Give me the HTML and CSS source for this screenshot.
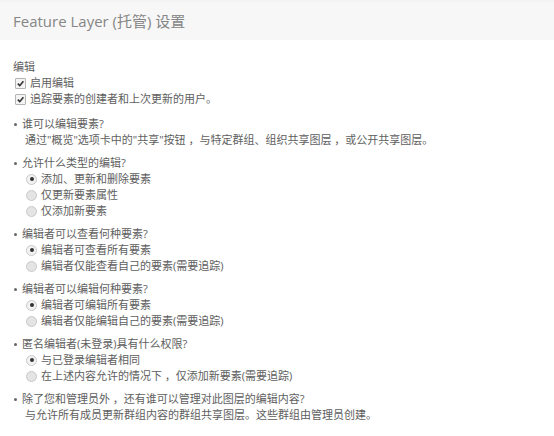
FILE: index.html
```html
<!DOCTYPE html>
<html lang="zh-CN">
<head>
    <meta charset="UTF-8">
    <title>Feature Layer (托管) 设置</title>
    <link rel="stylesheet" href="styles.css">
</head>
<body>
    <div class="panel-header">
        <h2>Feature Layer (托管) 设置</h2>
    </div>
    <div class="panel-body">
        <div class="group">
            <div class="group-title">编辑</div>
            <label class="option check"><span class="box checked"><svg viewBox="0 0 10 10"><path d="M2 5.2 L4.2 7.4 L8.2 2.4" /></svg></span>启用编辑</label>
            <label class="option check"><span class="box checked"><svg viewBox="0 0 10 10"><path d="M2 5.2 L4.2 7.4 L8.2 2.4" /></svg></span>追踪要素的创建者和上次更新的用户。</label>
        </div>

        <ul class="questions">
            <li>
                <div class="question">谁可以编辑要素?</div>
                <div class="note">通过"概览"选项卡中的"共享"按钮 ，与特定群组、组织共享图层 ，或公开共享图层。</div>
            </li>
            <li>
                <div class="question">允许什么类型的编辑?</div>
                <label class="option radio"><span class="dot selected"></span>添加、更新和删除要素</label>
                <label class="option radio"><span class="dot"></span>仅更新要素属性</label>
                <label class="option radio"><span class="dot"></span>仅添加新要素</label>
            </li>
            <li>
                <div class="question">编辑者可以查看何种要素?</div>
                <label class="option radio"><span class="dot selected"></span>编辑者可查看所有要素</label>
                <label class="option radio"><span class="dot"></span>编辑者仅能查看自己的要素(需要追踪)</label>
            </li>
            <li>
                <div class="question">编辑者可以编辑何种要素?</div>
                <label class="option radio"><span class="dot selected"></span>编辑者可编辑所有要素</label>
                <label class="option radio"><span class="dot"></span>编辑者仅能编辑自己的要素(需要追踪)</label>
            </li>
            <li>
                <div class="question">匿名编辑者(未登录)具有什么权限?</div>
                <label class="option radio"><span class="dot selected"></span>与已登录编辑者相同</label>
                <label class="option radio"><span class="dot"></span>在上述内容允许的情况下 ，仅添加新要素(需要追踪)</label>
            </li>
            <li>
                <div class="question">除了您和管理员外 ，还有谁可以管理对此图层的编辑内容?</div>
                <div class="note">与允许所有成员更新群组内容的群组共享图层。这些群组由管理员创建。</div>
            </li>
        </ul>
    </div>
</body>
</html>
```

FILE: styles.css
```css
body {
    margin: 0;
    padding: 0;
    background-color: #fff;
    font-family: 'Open Sans', 'Noto Sans CJK SC', sans-serif;
    font-size: 11px;
    line-height: 16px;
    color: #5e5e5e;
}
.panel-header {
    height: 40px;
    display: flex;
    align-items: center;
    padding: 0 13px;
    background-color: #f7f7f7;
    border-top: 2px solid #f3f3f3;
    box-sizing: border-box;
}
.panel-header h2 {
    margin: 0;
    font-size: 15px;
    font-weight: normal;
    color: #868686;
}
.panel-body {
    padding: 19px 13px 0;
}
.group-title {
    color: #5e5e5e;
}
.option {
    display: flex;
    align-items: center;
}
.check {
    padding-left: 2px;
}
.box {
    width: 9px;
    height: 9px;
    margin-right: 4px;
    border: 1px solid #b5b5b5;
    border-radius: 1px;
    background-color: #f4f4f4;
    display: inline-flex;
}
.box svg {
    width: 9px;
    height: 9px;
}
.box path {
    fill: none;
    stroke: #333;
    stroke-width: 1.8;
}
.questions {
    list-style: none;
    margin: 9px 0 0;
    padding: 0;
}
.questions li {
    margin-bottom: 7px;
}
.question {
    position: relative;
    padding-left: 9px;
}
.question::before {
    content: "";
    position: absolute;
    left: 1px;
    top: 7px;
    width: 3px;
    height: 3px;
    border-radius: 50%;
    background-color: #666;
}
.note {
    padding-left: 12px;
}
.radio {
    padding-left: 13px;
}
.dot {
    width: 9px;
    height: 9px;
    margin-right: 4px;
    border: 1px solid #c9c9c9;
    border-radius: 50%;
    background-color: #e4e4e4;
    display: inline-flex;
    align-items: center;
    justify-content: center;
}
.dot.selected {
    background-color: #f2f2f2;
}
.dot.selected::after {
    content: "";
    width: 4px;
    height: 4px;
    border-radius: 50%;
    background-color: #333;
}
```
